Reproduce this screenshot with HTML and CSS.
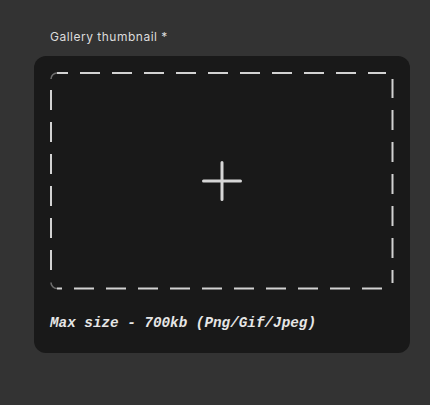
FILE: index.html
```html
<!DOCTYPE html>
<html>
<head>
<meta charset="utf-8">
<link rel="stylesheet" href="styles.css">
</head>
<body>
<div class="field">
  <div class="label">Gallery thumbnail *</div>
  <div class="card">
    <div class="drop">
      <svg class="dash" width="345" height="219" viewBox="0 0 345 219">
        <g fill="none" stroke="#d2d2d2" stroke-width="2" stroke-dasharray="20 12">
          <path d="M7 1 H336" stroke-dashoffset="9"/>
          <path d="M342.5 7 V211" stroke-dashoffset="1"/>
          <path d="M7 216.5 H336" stroke-dashoffset="15"/>
          <path d="M1 7 V210" stroke-dashoffset="21"/>
        </g>
        <g fill="none" stroke="#d2d2d2" stroke-width="1.6" opacity="0.45">
          <path d="M1 7 A6 6 0 0 1 7 1"/>
          <path d="M1 210.5 A6 6 0 0 0 7 216.5"/>
        </g>
      </svg>
      <svg class="plus" width="40" height="40" viewBox="0 0 40 40">
        <path d="M20 1.5 V38.5 M1.5 20 H38.5" stroke="#d6d6d6" stroke-width="3" stroke-linecap="round" fill="none"/>
      </svg>
    </div>
    <div class="hint">Max size - 700kb (Png/Gif/Jpeg)</div>
  </div>
</div>
</body>
</html>
```
FILE: styles.css
```css
html, body {
  margin: 0;
  padding: 0;
  background: #333333;
  width: 430px;
  height: 405px;
  overflow: hidden;
}
.field {
  padding: 29px 20px 0 34px;
  display: flex;
  flex-direction: column;
}
.label {
  font-family: Inter, "Noto Sans", sans-serif;
  font-size: 12px;
  letter-spacing: 0.5px;
  color: #dcdcdc;
  padding-left: 16px;
  line-height: 16px;
  height: 27px;
}
.card {
  width: 376px;
  height: 297px;
  box-sizing: border-box;
  background: #191919;
  border-radius: 12px;
  padding: 16px 17px 0 16px;
  display: flex;
  flex-direction: column;
}
.drop {
  position: relative;
  width: 343px;
  height: 217px;
  display: flex;
  align-items: center;
  justify-content: center;
}
.dash {
  position: absolute;
  left: 0;
  top: 0;
}
.plus {
  margin-left: 1px;
}
.hint {
  margin-top: 24px;
  font-family: "Liberation Mono", "DejaVu Sans Mono", monospace;
  font-style: italic;
  font-weight: bold;
  font-size: 14.3px;
  color: #e6e6e6;
  line-height: 20px;
}
```
